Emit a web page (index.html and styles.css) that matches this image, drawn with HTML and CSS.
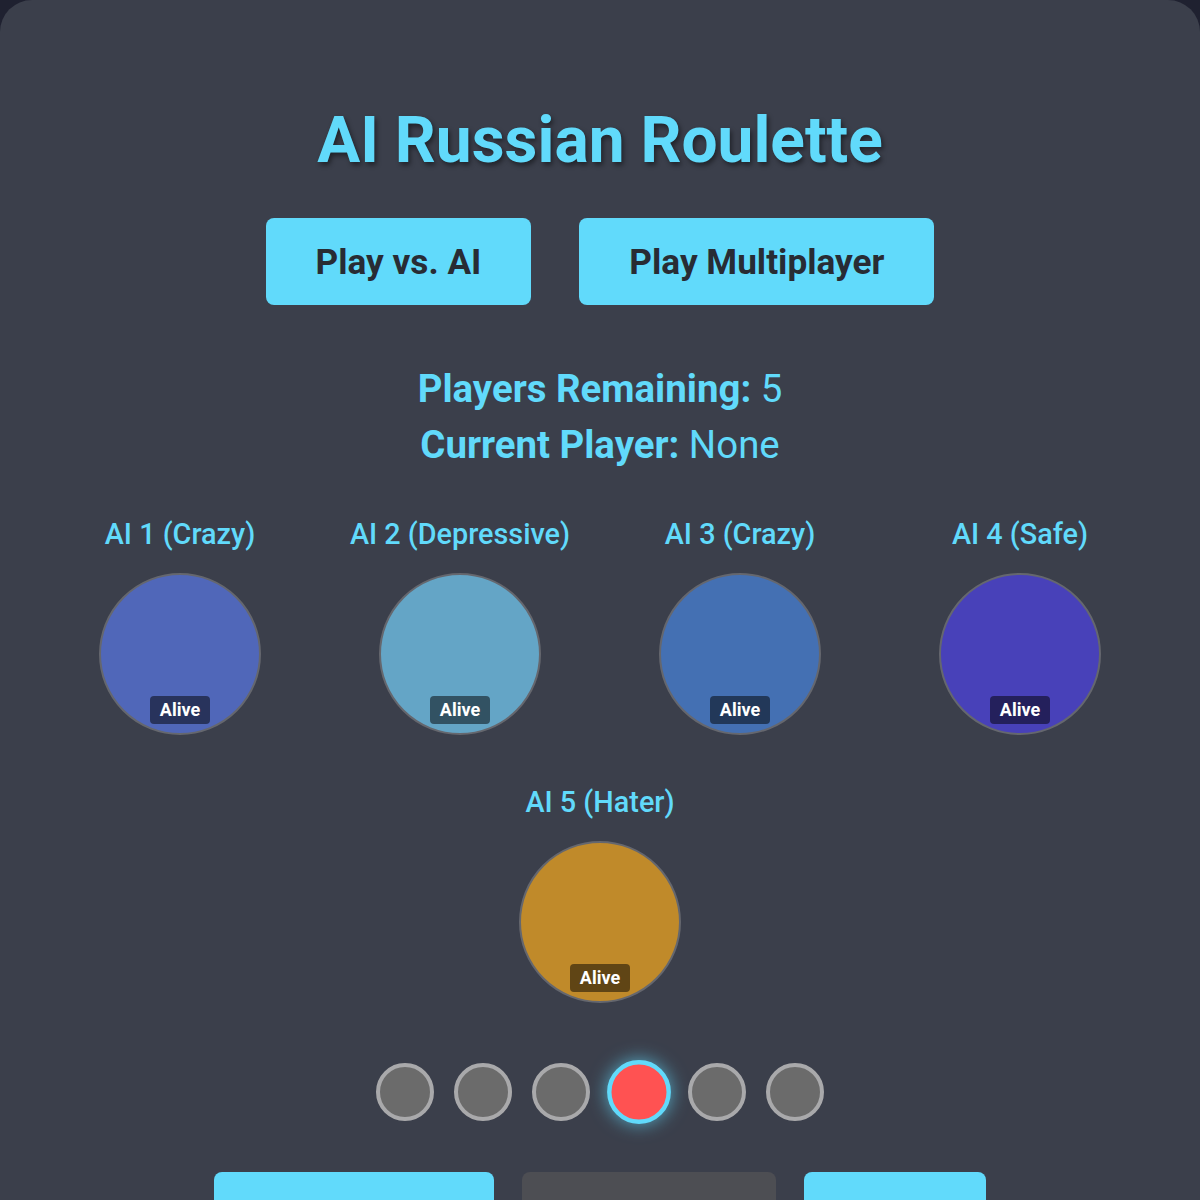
FILE: index.html
```html
<!DOCTYPE html>
<html>
<head>
<meta charset="utf-8">
<link rel="stylesheet" href="styles.css">
</head>
<body>
<div class="app">
  <h1 class="title">AI Russian Roulette</h1>
  <div class="modes">
    <button class="btn">Play vs. AI</button>
    <button class="btn">Play Multiplayer</button>
  </div>
  <div class="status">
    <p><b>Players Remaining:</b> 5</p>
    <p><b>Current Player:</b> None</p>
  </div>
  <div class="players">
    <div class="player">
      <div class="name">AI 1 (Crazy)</div>
      <div class="avatar c1"><span class="badge">Alive</span></div>
    </div>
    <div class="player">
      <div class="name">AI 2 (Depressive)</div>
      <div class="avatar c2"><span class="badge">Alive</span></div>
    </div>
    <div class="player">
      <div class="name">AI 3 (Crazy)</div>
      <div class="avatar c3"><span class="badge">Alive</span></div>
    </div>
    <div class="player">
      <div class="name">AI 4 (Safe)</div>
      <div class="avatar c4"><span class="badge">Alive</span></div>
    </div>
    <div class="player">
      <div class="name">AI 5 (Hater)</div>
      <div class="avatar c5"><span class="badge">Alive</span></div>
    </div>
  </div>
  <div class="cylinder">
    <span class="chamber"></span>
    <span class="chamber"></span>
    <span class="chamber"></span>
    <span class="chamber active"></span>
    <span class="chamber"></span>
    <span class="chamber"></span>
  </div>
  <div class="actions">
    <button class="btn act a1"></button>
    <button class="btn act a2"></button>
    <button class="btn act a3"></button>
  </div>
</div>
</body>
</html>
```
FILE: styles.css
```css
html, body {
  margin: 0;
  padding: 0;
  background: #1f2130;
  font-family: Roboto, "Noto Sans", sans-serif;
}
.app {
  background: #3b3f4b;
  border-radius: 32px;
  padding: 0 40px 60px;
  min-height: 1300px;
  box-sizing: border-box;
  display: flex;
  flex-direction: column;
  align-items: center;
  color: #61dafb;
}
.title {
  margin: 102px 0 0;
  font-size: 64px;
  line-height: 77px;
  font-weight: 700;
  color: #61dafb;
  text-shadow: 2px 3px 5px rgba(0, 0, 0, 0.45);
}
.modes {
  display: flex;
  gap: 48px;
  margin-top: 39px;
}
.btn {
  font-family: Roboto, "Noto Sans", sans-serif;
  background: #61dafb;
  color: #282c34;
  border: none;
  border-radius: 8px;
  font-size: 35.2px;
  font-weight: 700;
  height: 87px;
  padding: 0 50px;
}
.status {
  margin-top: 56px;
  text-align: center;
  font-size: 38.4px;
  line-height: 56px;
}
.status p { margin: 0; }
.status b { font-weight: 700; }
.players {
  margin-top: 41px;
  width: 1120px;
  display: flex;
  flex-wrap: wrap;
  justify-content: center;
  row-gap: 47px;
}
.player {
  width: 280px;
  display: flex;
  flex-direction: column;
  align-items: center;
}
.name {
  font-size: 28.8px;
  font-weight: 500;
  line-height: 40px;
  height: 40px;
  margin-bottom: 19px;
}
.avatar {
  width: 162px;
  height: 162px;
  box-sizing: border-box;
  border-radius: 50%;
  border: 2px solid #65676e;
  display: flex;
  align-items: flex-end;
  justify-content: center;
  padding-bottom: 9px;
}
.c1 { background: #5067b9; }
.c2 { background: #64a5c6; }
.c3 { background: #4470b3; }
.c4 { background: #4841b9; }
.c5 { background: #c08a2a; }
.badge {
  background: rgba(0, 0, 0, 0.5);
  color: #fff;
  font-size: 18px;
  font-weight: 700;
  line-height: 28px;
  padding: 0 10px;
  border-radius: 4px;
}
.cylinder {
  margin-top: 60px;
  display: flex;
  gap: 20px;
}
.chamber {
  width: 58px;
  height: 58px;
  box-sizing: border-box;
  border-radius: 50%;
  background: #6b6b6b;
  border: 4px solid #a9a9ab;
}
.chamber.active {
  background: #ff5252;
  border-color: #61dafb;
  transform: scale(1.1);
  box-shadow: 0 0 16px rgba(97, 218, 251, 0.7);
}
.actions {
  margin-top: 51px;
  display: flex;
  gap: 28px;
}
.act {
  height: 90px;
  padding: 0;
}
.a1 { width: 280px; }
.a2 { width: 254px; background: #4d4e53; }
.a3 { width: 182px; }
```
